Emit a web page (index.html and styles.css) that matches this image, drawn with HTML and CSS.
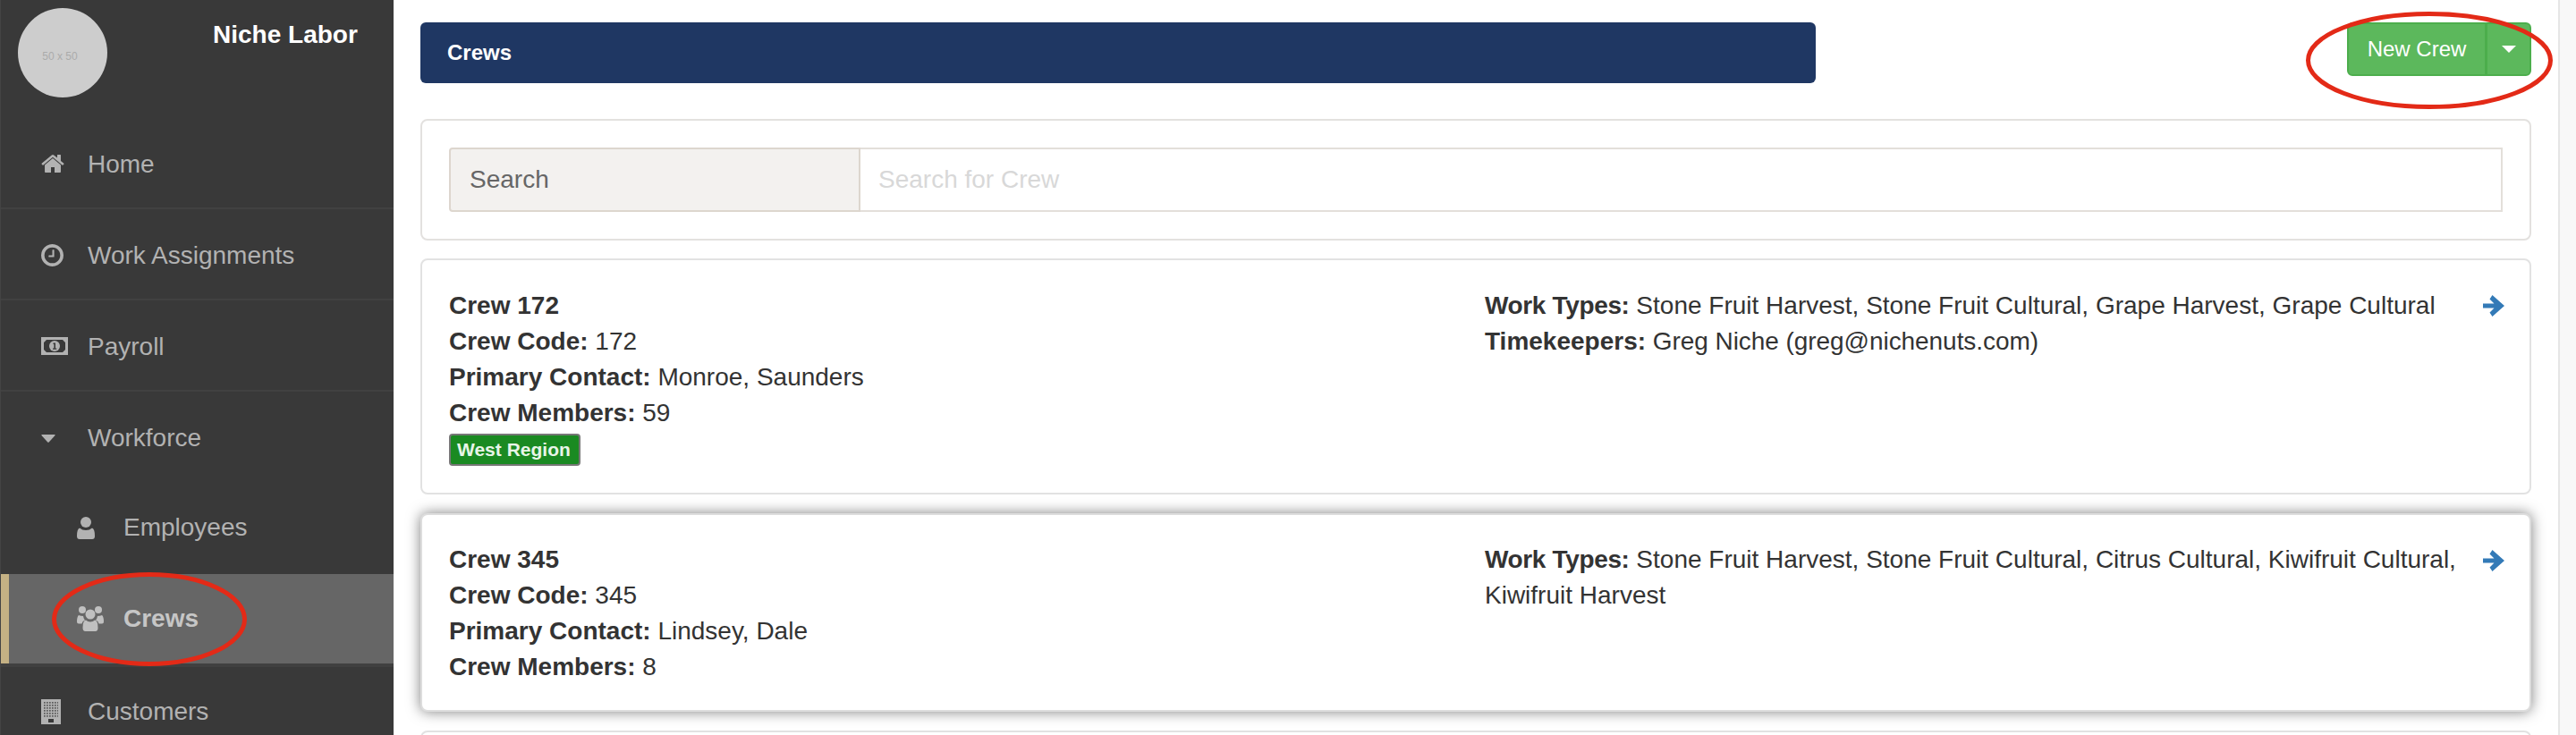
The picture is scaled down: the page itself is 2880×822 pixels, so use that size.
FILE: index.html
```html
<!DOCTYPE html>
<html lang="en">
<head>
<meta charset="utf-8">
<title>Crews</title>
<link rel="stylesheet" href="styles.css">
</head>
<body>
<div class="app">
  <aside class="sidebar">
    <div class="brand">
      <div class="avatar"><span>50 x 50</span></div>
      <div class="brand-name">Niche Labor</div>
    </div>
    <nav>
      <a class="nav-item divided">
        <svg class="icon icon-home" viewBox="64 250 1664 1286"><path d="M1472 992v480q0 26-19 45t-45 19h-384v-384h-256v384h-384q-26 0-45-19t-19-45v-480q0-1 .5-3t.5-3l575-474 575 474q1 2 1 6zm223-69l-62 74q-8 9-21 11h-3q-13 0-21-7l-692-577-692 577q-12 8-24 7-13-2-21-11l-62-74q-8-10-7-23.500t11-21.500l719-599q32-26 76-26t76 26l244 204v-195q0-14 9-23t23-9h192q14 0 23 9t9 23v408l219 182q10 8 11 21.500t-7 23.500z"/></svg>
        <span>Home</span>
      </a>
      <a class="nav-item divided">
        <svg class="icon icon-clock" viewBox="128 128 1536 1536"><path d="M1024 544v448q0 14-9 23t-23 9h-320q-14 0-23-9t-9-23v-64q0-14 9-23t23-9h224v-352q0-14 9-23t23-9h64q14 0 23 9t9 23zm416 352q0-148-73-273t-198-198-273-73-273 73-198 198-73 273 73 273 198 198 273 73 273-73 198-198 73-273zm224 0q0 209-103 385.500t-279.500 279.500-385.500 103-385.500-103-279.500-279.500-103-385.500 103-385.500 279.500-279.500 385.500-103 385.500 103 279.500 279.500 103 385.500z"/></svg>
        <span>Work Assignments</span>
      </a>
      <a class="nav-item divided">
        <svg class="icon icon-money" viewBox="0 0 30 20"><path fill-rule="evenodd" d="M0 0h30v20H0zM6 3L3 6v8l3 3h18l3-3V6l-3-3z"/><circle cx="15" cy="10" r="6"/><path class="money-one" d="M13.500 6.500h2.500v6h1.300v1.200h-4.300v-1.200h1.400V8h-.9z"/></svg>
        <span>Payroll</span>
      </a>
      <a class="nav-item group-head">
        <svg class="icon icon-caret" viewBox="0 0 16 9"><path d="M1 0h14q1.200 0 .5 1L8.700 8.500q-.7.700-1.400 0L.5 1Q-.2 0 1 0z"/></svg>
        <span>Workforce</span>
      </a>
      <a class="nav-item sub">
        <svg class="icon icon-user" viewBox="0 0 20 25"><circle cx="10" cy="6" r="6"/><path d="M3 12.500q3 2.500 7 2.500t7-2.500q3 1 3 9 0 3.500-3 3.500H3q-3 0-3-3.500 0-8 3-9z"/></svg>
        <span>Employees</span>
      </a>
      <a class="nav-item sub active">
        <svg class="icon icon-group" viewBox="0 0 30 28"><circle cx="6" cy="4" r="4"/><circle cx="24" cy="4" r="4"/><circle cx="15" cy="9" r="5.500"/><path d="M2 10q2 1 5 1 .5 3 2 4.500-3 1-3.500 4H2q-2 0-2-2 0-6 2-7.500zM28 10q-2 1-5 1-.5 3-2 4.500 3 1 3.500 4H28q2 0 2-2 0-6-2-7.500zM10 15.500q2 2 5 2t5-2q3.500.5 3.500 8.500 0 4-3 4h-11q-3 0-3-4 0-8 3.500-8.500z"/></svg>
        <span>Crews</span>
      </a>
      <a class="nav-item last">
        <svg class="icon icon-building" viewBox="0 0 22 28"><defs><pattern id="windows" width="3" height="3" patternUnits="userSpaceOnUse" x="3" y="3"><rect width="1.700" height="1.700"/></pattern></defs><path d="M0 0h22v28H0z"/><rect class="windows" x="3" y="3" width="16" height="17"/><rect class="door" x="8" y="22" width="6" height="4"/></svg>
        <span>Customers</span>
      </a>
    </nav>
  </aside>

  <main class="content">
    <header class="page-head">
      <h1 class="page-title">Crews</h1>
      <div class="btn-group">
        <button class="btn btn-main">New Crew</button>
        <button class="btn btn-toggle"><span class="caret"></span></button>
      </div>
    </header>

    <section class="panel search-panel">
      <div class="input-group">
        <label class="addon" for="q">Search</label>
        <input id="q" class="search-input" type="text" placeholder="Search for Crew">
      </div>
    </section>

    <article class="panel crew">
      <div class="crew-left">
        <div><b>Crew 172</b></div>
        <div><b>Crew Code:</b> 172</div>
        <div><b>Primary Contact:</b> Monroe, Saunders</div>
        <div><b>Crew Members:</b> 59</div>
        <span class="badge">West Region</span>
      </div>
      <div class="crew-right">
        <div><b class="label-tight">Work Types:</b> Stone Fruit Harvest, Stone Fruit Cultural, Grape Harvest, Grape Cultural</div>
        <div><b>Timekeepers:</b> <span class="keeper">Greg Niche (greg@nichenuts.com)</span></div>
      </div>
      <svg class="arrow" viewBox="0 0 24 24"><path d="M0 9.500h12.500L7.500 4.500 10.500 0 24 12 10.500 24l-3-4.500 5-5H0z"/></svg>
    </article>

    <article class="panel crew raised">
      <div class="crew-left">
        <div><b>Crew 345</b></div>
        <div><b>Crew Code:</b> 345</div>
        <div><b>Primary Contact:</b> Lindsey, Dale</div>
        <div><b>Crew Members:</b> 8</div>
      </div>
      <div class="crew-right">
        <div><b class="label-tight">Work Types:</b> Stone Fruit Harvest, Stone Fruit Cultural, Citrus Cultural, Kiwifruit Cultural, Kiwifruit Harvest</div>
      </div>
      <svg class="arrow" viewBox="0 0 24 24"><path d="M0 9.500h12.500L7.500 4.500 10.500 0 24 12 10.500 24l-3-4.500 5-5H0z"/></svg>
    </article>

    <article class="panel crew"></article>
  </main>
  <div class="gutter"></div>

  <svg class="ring ring-nav" viewBox="0 0 218 105"><ellipse cx="109" cy="52.500" rx="106.500" ry="50"/></svg>
  <svg class="ring ring-btn" viewBox="0 0 276 109"><ellipse cx="138" cy="54.500" rx="135.500" ry="52"/></svg>
</div>
</body>
</html>
```

FILE: styles.css
```css
* { box-sizing: border-box; }
html, body { margin: 0; height: 822px; overflow: hidden; background: #fff; }
body { font-family: "Liberation Sans", Arial, sans-serif; font-size: 28px; line-height: 40px; color: #333; }
b { font-weight: 700; }

.app { position: relative; display: flex; height: 822px; overflow: hidden; }

/* sidebar */
.sidebar { flex: 0 0 440px; background: #393939; color: #b2b2b2; border-left: 1px solid #444; }
.brand { display: flex; height: 132px; padding: 9px 0 0 19px; }
.avatar { width: 100px; height: 100px; border-radius: 50%; background: #cdcdcd; color: #ababab; font-size: 12px; line-height: 20px; display: flex; align-items: center; justify-content: center; padding: 8px 6px 0 0; }
.brand-name { margin-left: 118px; padding-top: 10px; font-size: 28px; font-weight: 700; color: #fff; }

.nav-item { display: flex; align-items: center; height: 102px; padding-left: 45px; position: relative; }
.nav-item span { position: absolute; left: 97px; }
.nav-item.divided { padding-top: 4px; border-bottom: 2px solid #414141; }
.nav-item.divided .icon { margin-top: -2px; }
.nav-item.group-head { padding-top: 2px; }
.nav-item.sub { padding-left: 85px; padding-bottom: 2px; }
.nav-item.last { padding-bottom: 2px; }
.nav-item.sub span { left: 137px; }
.nav-item.active { height: 100px; margin-bottom: 4px; padding-bottom: 0; background: #666; color: #c6c6c6; font-weight: 700; box-shadow: inset 9px 0 0 #c4b184, 0 4px 0 #404040; }
.icon { display: block; fill: #b2b2b2; }
.active .icon { fill: #c0c0c0; }
.icon-home { width: 26px; height: 20px; }
.icon-clock { width: 25px; height: 25px; }
.icon-money { width: 30px; height: 20px; }
.money-one { fill: #393939; }
.icon-caret { width: 16px; height: 9px; }
.icon-user { width: 20px; height: 25px; }
.icon-group { width: 30px; height: 28px; }
.icon-building { width: 22px; height: 28px; }
.windows { fill: url(#windows); }
.icon-building pattern rect { fill: #5a5a5a; }
.door { fill: #393939; }

/* main */
.content { flex: 1 1 auto; min-width: 0; padding: 25px 30px 0; }
.page-head { display: flex; justify-content: space-between; align-items: flex-start; margin-bottom: 40px; }
.page-title { width: 1560px; height: 68px; margin: 0; padding: 0 30px; background: #1f3763; border-radius: 6px; color: #fff; font-size: 24px; font-weight: 700; line-height: 68px; }
.btn-group { display: flex; height: 60px; }
.btn { height: 60px; margin: 0; background: #5cb85c; border: 2px solid #4cae4c; color: #fff; font-family: inherit; font-size: 24px; padding: 0; }
.btn-main { width: 156px; border-radius: 6px 0 0 6px; }
.btn-toggle { width: 51px; margin-left: -1px; border-radius: 0 6px 6px 0; display: flex; align-items: center; justify-content: center; }
.caret { width: 0; height: 0; border-top: 8px solid #fff; border-left: 8px solid transparent; border-right: 8px solid transparent; }

.panel { background: #fff; border: 2px solid #e2e2e2; border-radius: 8px; margin-bottom: 21px; }
.search-panel { height: 136px; margin-bottom: 20px; padding: 30px 30px 0; border-color: #e3e1df; }
.input-group { display: flex; height: 72px; }
.addon { flex: 0 0 460px; display: flex; align-items: center; padding-left: 21px; background: #f3f1ef; border: 2px solid #ddd6ce; border-radius: 4px 0 0 4px; color: #666; }
.search-input { flex: 1 1 auto; min-width: 0; height: 72px; padding: 0 20px; border: 2px solid #e3dfda; border-left: 0; border-radius: 0; outline: 0; font-family: inherit; font-size: 28px; color: #333; }
.search-input::placeholder { color: #d8d8d8; opacity: 1; }

.crew { position: relative; display: flex; padding: 31px 30px 0; height: 264px; }
.crew.raised { height: 222px; padding-top: 30px; border-color: #ddd; box-shadow: 0 0 15px rgba(0, 0, 0, .5); }
.crew-left { flex: 0 0 1158px; }
.crew-right { width: 1095px; }
.label-tight { letter-spacing: -.35px; }
.keeper { letter-spacing: -.06px; }
.badge { display: inline-block; height: 36px; margin-top: 3px; padding: 0 9px 0 7px; background: #1a8a22; border: 2px solid #777; border-radius: 4px; color: #e8f5e8; font-size: 21px; font-weight: 700; line-height: 32px; vertical-align: top; }
.arrow { position: absolute; top: 39px; right: 28px; width: 24px; height: 24px; fill: #337ab7; }

.gutter { flex: 0 0 20px; background: #f8f8f8; border-left: 2px solid #e6e6e6; }

/* hand-drawn annotation circles over the screenshot */
.ring { position: absolute; fill: none; stroke: #e32a17; stroke-width: 5; }
.ring-nav { left: 58px; top: 640px; width: 218px; height: 105px; }
.ring-btn { left: 2578px; top: 13px; width: 276px; height: 109px; }
```
